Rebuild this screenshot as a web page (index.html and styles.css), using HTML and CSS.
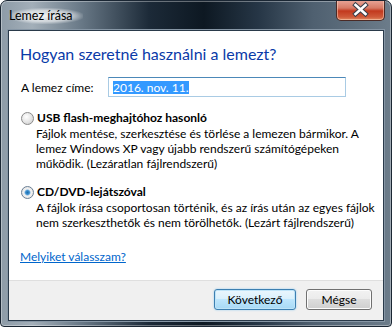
FILE: index.html
```html
<!DOCTYPE html>
<html lang="hu">
<head>
  <meta charset="UTF-8">
  <title>Lemez írása</title>
  <link rel="stylesheet" href="styles.css">
</head>
<body>

  <div class="window">
    <div class="titlebar">
      <span class="title">Lemez írása</span>
      <div class="close-btn">
        <svg width="47" height="19" viewBox="0 0 47 19">
          <path d="M18.5 5 L28.5 14 M28.5 5 L18.5 14" stroke="#3a3f4a" stroke-width="4.6" stroke-linecap="square"/>
          <path d="M18.5 5 L28.5 14 M28.5 5 L18.5 14" stroke="#ffffff" stroke-width="2.6" stroke-linecap="square"/>
        </svg>
      </div>
    </div>

    <div class="client">
      <div class="content">
        <h1 class="instruction">Hogyan szeretné használni a lemezt?</h1>

        <div class="name-row">
          <label class="name-label">A lemez címe:</label>
          <div class="textbox"><span class="selected-text">2016. nov. 11.</span></div>
        </div>

        <div class="option">
          <div class="option-head">
            <span class="radio"></span>
            <span class="option-title">USB flash-meghajtóhoz hasonló</span>
          </div>
          <p class="option-desc">Fájlok mentése, szerkesztése és törlése a lemezen bármikor. A<br>lemez Windows XP vagy újabb rendszerű számítógépeken<br>működik. (Lezáratlan fájlrendszerű)</p>
        </div>

        <div class="option">
          <div class="option-head">
            <span class="radio checked"></span>
            <span class="option-title">CD/DVD-lejátszóval</span>
          </div>
          <p class="option-desc">A fájlok írása csoportosan történik, és az írás után az egyes fájlok<br>nem szerkeszthetők és nem törölhetők. (Lezárt fájlrendszerű)</p>
        </div>

        <a class="help-link" href="#">Melyiket válasszam?</a>
      </div>

      <div class="footer">
        <button class="btn btn-default">Következő</button>
        <button class="btn btn-cancel">Mégse</button>
      </div>
    </div>
  </div>

</body>
</html>
```

FILE: styles.css
```css
body {
  margin: 0;
  padding: 0;
  background: #ffffff;
  font-family: 'Lato', 'Noto Sans', sans-serif;
  font-size: 12px;
  color: #000;
}

.window {
  width: 390px;
  height: 325px;
  border: 1px solid #1a2633;
  border-radius: 7px 7px 4px 4px;
  background: linear-gradient(to right, #8d9ba7 0%, #a3afb9 8%, #6b7b89 20%, #1c2a38 38%, #0d1822 52%, #263646 66%, #4f6070 80%, #6c7c8a 100%);
  display: flex;
  flex-direction: column;
  overflow: hidden;
  box-shadow: inset 0 0 0 1px rgba(255, 255, 255, 0.35);
}

.titlebar {
  height: 29px;
  display: flex;
  align-items: flex-start;
}

.title {
  margin: 7px 0 0 8px;
  line-height: 16px;
  font-size: 12.5px;
  padding: 0 10px 0 0;
  color: #000;
  background: radial-gradient(ellipse at center, rgba(255, 255, 255, 0.85) 0%, rgba(255, 255, 255, 0.55) 50%, rgba(255, 255, 255, 0) 75%);
}

.close-btn {
  margin-left: auto;
  margin-right: 6px;
  margin-top: -1px;
  width: 47px;
  height: 20px;
  border: 1px solid #4a2a26;
  border-top: none;
  border-radius: 0 0 5px 5px;
  background: linear-gradient(to bottom, #e9a79a 0%, #d67a66 40%, #c2391e 55%, #cf5a3a 85%, #e08a60 100%);
  box-shadow: inset 0 0 0 1px rgba(255, 220, 200, 0.5);
}

.close-btn svg {
  display: block;
}

.client {
  margin: 0 7px;
  height: 289px;
  background: #ffffff;
  border: 1px solid #2a3a4a;
  box-shadow: 0 0 0 1px #8696a5;
  display: flex;
  flex-direction: column;
}

.content {
  flex: 1;
  padding: 12px 12px 0 11px;
}

.instruction {
  margin: 0;
  font-size: 16px;
  font-weight: normal;
  line-height: 22px;
  color: #0a3aa8;
}

.name-row {
  display: flex;
  align-items: center;
  margin-top: 12px;
  padding-left: 1px;
}

.name-label {
  width: 87px;
}

.textbox {
  width: 232px;
  height: 18px;
  border: 1px solid #a9cbe4;
  border-top-color: #4c88b8;
  background: #fff;
  display: flex;
  align-items: center;
  padding-left: 4px;
}

.selected-text {
  background: #3399ff;
  color: #fff;
  line-height: 13px;
  height: 13px;
}

.option {
  margin-top: 13px;
}

.option-head {
  display: flex;
  align-items: center;
  line-height: 16px;
}

.radio {
  width: 11px;
  height: 11px;
  border: 1px solid #8a8a8a;
  border-radius: 50%;
  background: radial-gradient(circle at 40% 35%, #ffffff 0%, #e6e6e6 50%, #c8c8c8 100%);
  margin: 0 3px 0 1px;
}

.radio.checked {
  border-color: #6a7f95;
  background: radial-gradient(circle, #1c6fae 0%, #3c8fd0 25%, #9ac4e6 35%, #f2f2f2 45%, #dcdcdc 100%);
}

.option-title {
  font-weight: bold;
}

.option-desc {
  margin: 0;
  padding-left: 16px;
  line-height: 15px;
  white-space: nowrap;
}

.help-link {
  display: block;
  margin-top: 19px;
  line-height: 16px;
  color: #0066cc;
  text-decoration: underline;
}

.footer {
  height: 40px;
  border-top: 1px solid #dfdfdf;
  background: #f0f0f0;
  display: flex;
  justify-content: flex-end;
  align-items: flex-start;
  gap: 10px;
  padding: 8px 11px 0 0;
  box-sizing: border-box;
}

.btn {
  font-family: 'Lato', 'Noto Sans', sans-serif;
  font-size: 12px;
  height: 21px;
  padding: 0;
  border-radius: 3px;
  border: 1px solid #707070;
  background: linear-gradient(to bottom, #f2f2f2 0%, #ebebeb 49%, #dddddd 50%, #cfcfcf 100%);
  box-shadow: inset 0 0 0 1px #fcfcfc;
  color: #000;
}

.btn-default {
  width: 82px;
  border-color: #3c7fb1;
  background: linear-gradient(to bottom, #eaf6fd 0%, #d9f0fc 49%, #bee6fd 50%, #a7d9f5 100%);
  box-shadow: inset 0 0 0 1px #bfe4f8, 0 0 2px #8fc8ee;
}

.btn-cancel {
  width: 66px;
}
```
